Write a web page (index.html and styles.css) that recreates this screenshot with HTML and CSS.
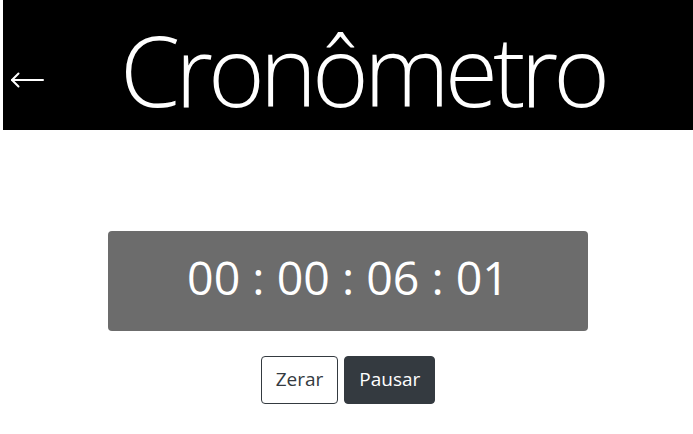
FILE: index.html
```html
<!DOCTYPE html>
<html lang="pt">
<head>
<meta charset="utf-8">
<title>Cronômetro</title>
<link rel="stylesheet" href="styles.css">
</head>
<body>
<header class="topbar">
  <span class="back" aria-label="Voltar">
    <svg class="back-icon" width="34" height="18" viewBox="0 0 34 18" fill="none" stroke="#fff" stroke-width="2" stroke-linecap="round" stroke-linejoin="round">
      <path d="M2 9 H33"/>
      <path d="M8.5 2.5 L2 9 L8.5 15.5"/>
    </svg>
  </span>
  <h1 class="title">Cronômetro</h1>
</header>
<main class="content">
  <div class="display">00 : 00 : 06 : 01</div>
  <div class="actions">
    <button class="btn btn-outline">Zerar</button>
    <button class="btn btn-dark">Pausar</button>
  </div>
</main>
</body>
</html>
```
FILE: styles.css
```css
html, body {
  margin: 0;
  padding: 0;
  background: #fff;
}
body {
  font-family: "Open Sans", "Noto Sans", sans-serif;
  overflow: hidden;
}
.topbar {
  margin-left: 3px;
  height: 130px;
  background: #000;
  color: #fff;
  display: flex;
  align-items: center;
}
.back {
  display: flex;
  margin-left: 7px;
  margin-top: 30px;
}
.back-icon {
  display: block;
}
.title {
  margin: 8px 0 0 76px;
  font-family: "Open Sans", sans-serif;
  font-weight: 300;
  font-size: 97px;
  line-height: 1;
  letter-spacing: -5px;
}
.content {
  margin-left: 3px;
  display: flex;
  flex-direction: column;
  align-items: center;
  padding-top: 101px;
}
.display {
  width: 480px;
  height: 100px;
  box-sizing: border-box;
  padding-bottom: 8px;
  background: #6c6c6c;
  border-radius: 4px;
  color: #fff;
  font-size: 46.5px;
  display: flex;
  align-items: center;
  justify-content: center;
}
.actions {
  display: flex;
  gap: 6px;
  margin-top: 25px;
}
.btn {
  font-family: "Open Sans", sans-serif;
  font-size: 19px;
  height: 48px;
  padding: 0 14px 2px;
  border-radius: 4px;
  border: 1px solid #343a40;
  line-height: 1;
}
.btn-outline {
  background: #fff;
  color: #343a40;
}
.btn-dark {
  background: #343a40;
  color: #fff;
}
```
